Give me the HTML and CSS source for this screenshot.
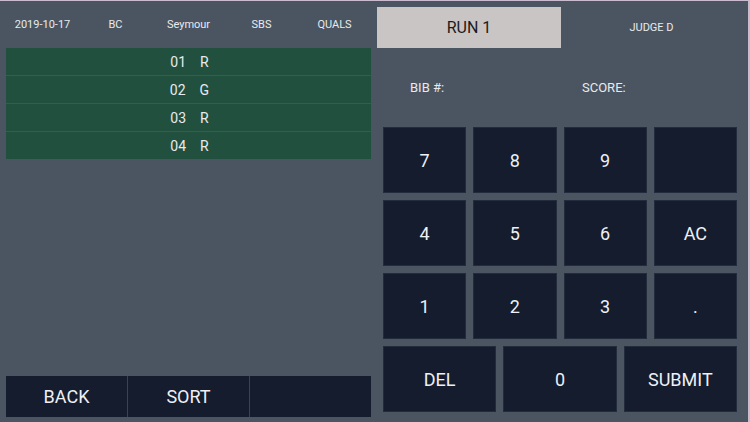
FILE: index.html
```html
<!DOCTYPE html>
<html lang="en">
<head>
    <meta charset="utf-8">
    <link rel="stylesheet" href="styles.css">
</head>
<body>
    <div class="screen">
        <!-- Colonne gauche : infos + liste -->
        <div class="left">
            <div class="info-bar">
                <span>2019-10-17</span>
                <span>BC</span>
                <span>Seymour</span>
                <span>SBS</span>
                <span>QUALS</span>
            </div>
            <div class="bib-list">
                <div class="bib-row"><span>01</span><span>R</span></div>
                <div class="bib-row"><span>02</span><span>G</span></div>
                <div class="bib-row"><span>03</span><span>R</span></div>
                <div class="bib-row"><span>04</span><span>R</span></div>
            </div>
            <div class="bottom-bar">
                <button>BACK</button>
                <button>SORT</button>
                <button></button>
            </div>
        </div>

        <!-- Colonne droite : saisie -->
        <div class="right">
            <div class="run-bar">
                <div class="run-label">RUN 1</div>
                <div class="judge-label">JUDGE D</div>
            </div>
            <div class="entry">
                <span class="bib-field">BIB #:</span>
                <span class="score-field">SCORE:</span>
            </div>
            <div class="keypad">
                <button>7</button>
                <button>8</button>
                <button>9</button>
                <button></button>
                <button>4</button>
                <button>5</button>
                <button>6</button>
                <button>AC</button>
                <button>1</button>
                <button>2</button>
                <button>3</button>
                <button>.</button>
            </div>
            <div class="keypad-last">
                <button>DEL</button>
                <button>0</button>
                <button>SUBMIT</button>
            </div>
        </div>
    </div>
</body>
</html>
```

FILE: styles.css
```css
html, body {
    margin: 0;
    padding: 0;
}

body {
    background-color: #4a5561;
    font-family: Roboto, "Liberation Sans", sans-serif;
    color: #e8eaee;
}

.screen {
    width: 750px;
    height: 422px;
    box-sizing: border-box;
    border-top: 1px solid #c9bccf;
    border-right: 2px solid #c9bccf;
    display: flex;
}

button {
    font-family: inherit;
    color: #eef0f4;
    background-color: #141c2e;
    border: none;
    padding: 0;
    margin: 0;
}

/* ---- gauche ---- */
.left {
    width: 375px;
    box-sizing: border-box;
    padding: 0 4px 5px 6px;
    display: flex;
    flex-direction: column;
}

.info-bar {
    height: 47px;
    display: grid;
    grid-template-columns: repeat(5, 1fr);
    align-items: center;
    font-size: 11px;
    text-align: center;
}

.bib-list {
    display: flex;
    flex-direction: column;
    background-color: #3c5a52;
    gap: 1px;
}

    .bib-list .bib-row {
        height: 27px;
        background-color: #22503f;
        display: flex;
        justify-content: center;
        align-items: center;
        gap: 14px;
        font-size: 14px;
        padding-left: 2px;
    }

.bottom-bar {
    margin-top: auto;
    height: 41px;
    display: flex;
    gap: 1px;
    background-color: #3a4350;
}

    .bottom-bar button {
        flex: 1;
        font-size: 18px;
    }

/* ---- droite ---- */
.right {
    flex: 1;
    box-sizing: border-box;
    padding: 6px 6px 9px 2px;
    display: flex;
    flex-direction: column;
}

.run-bar {
    display: flex;
    height: 41px;
}

.run-label {
    width: 184px;
    background-color: #c9c5c5;
    color: #1b1b1b;
    font-size: 16px;
    display: flex;
    align-items: center;
    justify-content: center;
}

.judge-label {
    flex: 1;
    font-size: 11px;
    display: flex;
    align-items: center;
    justify-content: center;
}

.entry {
    height: 79px;
    display: flex;
    align-items: center;
    font-size: 13px;
}

.bib-field {
    margin-left: 33px;
    width: 172px;
}

.keypad {
    margin-left: 6px;
    width: 354px;
    display: grid;
    grid-template-columns: repeat(4, 1fr);
    grid-auto-rows: 66px;
    gap: 7px;
}

.keypad-last {
    margin-left: 6px;
    margin-top: 7px;
    width: 354px;
    height: 66px;
    display: grid;
    grid-template-columns: repeat(3, 1fr);
    gap: 7px;
}

.keypad button,
.keypad-last button {
    font-size: 18px;
    border: 1px solid #232c3c;
}
```
